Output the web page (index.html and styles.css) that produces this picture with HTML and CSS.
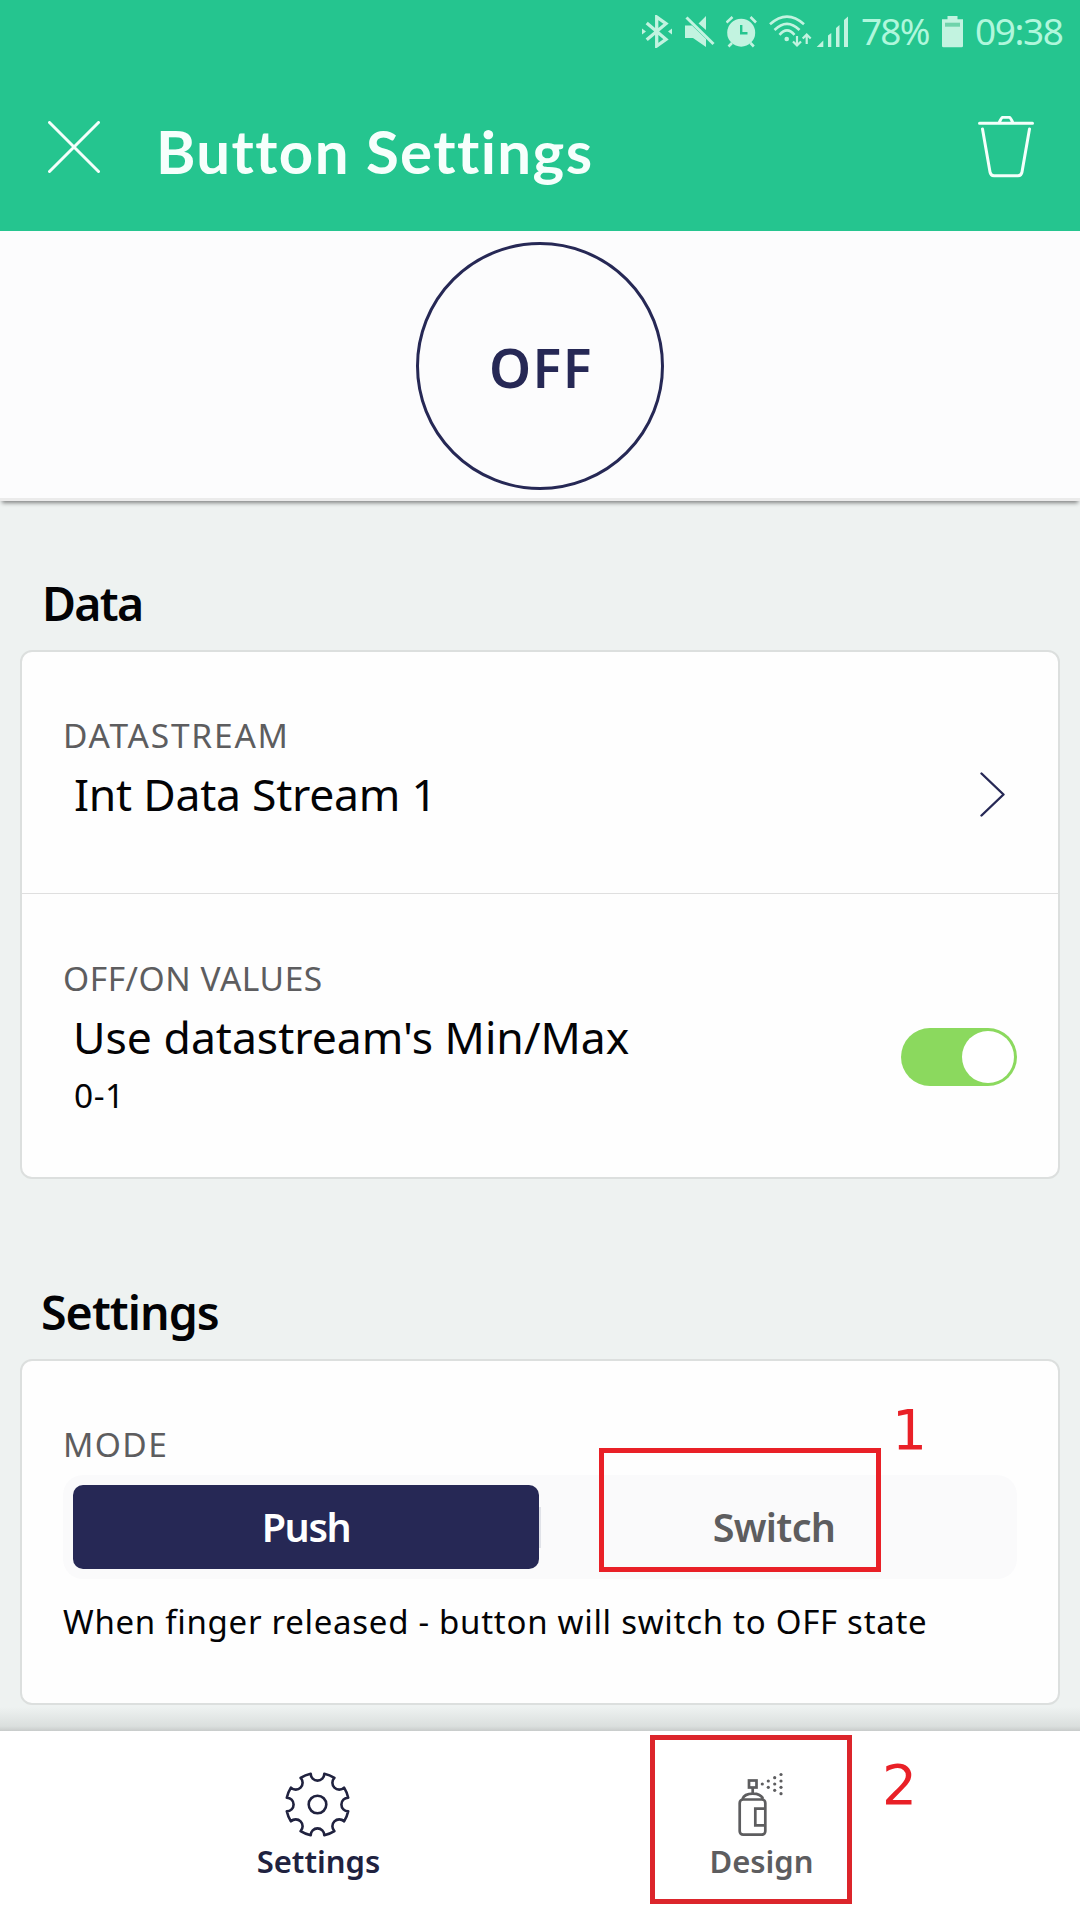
FILE: index.html
```html
<!DOCTYPE html>
<html lang="en">
<head>
<meta charset="utf-8">
<title>Button Settings</title>
<link rel="stylesheet" href="styles.css">
</head>
<body>
<div class="screen">
  <header class="header">
    <div class="status">
      <svg class="st-bt" width="30" height="33" viewBox="0 0 30 33"><path d="M4.7 8 24 24.3 14.7 31V2L24 8.7 4.7 24.7" fill="none" stroke="currentColor" stroke-width="3.3"/><path d="M0 13.5 4 16.5 0 19.5ZM30 13.5 26 16.5 30 19.5Z" fill="currentColor"/></svg>
      <svg class="st-mute" width="30" height="33" viewBox="0 0 30 33"><path d="M0 10.5H7L21 24V32L8 23H0ZM21 1V15L13.5 8.5Z" fill="currentColor"/><path d="M1.5 2.5 28.5 29" stroke="currentColor" stroke-width="3"/></svg>
      <svg class="st-alarm" width="31" height="33" viewBox="0 0 31 33"><circle cx="15.2" cy="17.7" r="14" fill="currentColor"/><path d="M.5 7.5 6.5 2M24.5 2 30 7.5M6 28 2.5 31.5M24.5 28 27.8 31.5" stroke="currentColor" stroke-width="2.6"/><path class="hand" d="M15.2 10V18.3H21.5"/></svg>
      <svg class="st-wifi" width="43" height="33" viewBox="0 0 43 33"><g fill="none" stroke="currentColor" stroke-width="2.6"><path d="M1 9.3Q18-6 35 9.3M5.5 15Q18 2.5 30.5 15M10.5 19.8Q18 11 25.5 19.8"/><path d="M28 21V30M24 26.5 28 30.5 32 26.5M37.7 29V20M33.7 23.5 37.7 19.5 41.7 23.5" stroke-width="2.2"/></g><circle cx="17.7" cy="24" r="2.3" fill="currentColor"/></svg>
      <svg class="st-signal" width="33" height="33" viewBox="0 0 33 33"><path d="M.7 32 7.3 25.5V32ZM12 32V20.5L15.3 18V32ZM20 32V13L23.5 10V32ZM28 32V5L32 1.5V32Z" fill="currentColor"/></svg>
      <span class="st-pct">78%</span>
      <svg class="st-batt" width="21" height="33" viewBox="0 0 21 33"><path d="M5.5 1H15.5V4.3H21V31Q21 32.3 19.5 32.3H1.5Q0 32.3 0 31V4.3H5.5Z" fill="currentColor"/><path class="level" d="M3 7.7H18V11.7H3Z"/></svg>
      <span class="st-time">09:38</span>
    </div>
    <div class="bar">
      <svg class="close" width="52" height="52" viewBox="0 0 52 52"><path d="M1.5 1.5 50.5 50.5M50.5 1.5 1.5 50.5"/></svg>
      <h1 class="title">Button Settings</h1>
      <svg class="trash" width="56" height="62" viewBox="0 0 56 62"><path d="M1.5 7.2H54.5M21 7Q23.5 1.2 25 1.2H31Q32.5 1.2 35 7M4.5 13 12 56Q12.6 59.7 16 59.7H40Q43.4 59.700 44 56L51.5 13"/></svg>
    </div>
  </header>

  <section class="preview"><div class="knob">OFF</div></section>

  <main class="content">
    <h2 class="heading">Data</h2>
    <div class="card">
      <div class="row stream">
        <div>
          <div class="label wide">DATASTREAM</div>
          <div class="value tight">Int Data Stream 1</div>
        </div>
        <svg class="chevron" width="25" height="45" viewBox="0 0 25 45"><path d="M1.5 1.500 23.500 22.500 1.500 43.500"/></svg>
      </div>
      <div class="row range">
        <div>
          <div class="label">OFF/ON VALUES</div>
          <div class="value">Use datastream's Min/Max</div>
          <div class="sub">0-1</div>
        </div>
        <div class="toggle"><span class="thumb"></span></div>
      </div>
    </div>

    <h2 class="heading second">Settings</h2>
    <div class="card mode">
      <div class="label medium">MODE</div>
      <div class="segmented">
        <div class="option active">Push</div>
        <div class="divider"></div>
        <div class="option">Switch</div>
      </div>
      <p class="hint">When finger released - button will switch to OFF state</p>
    </div>
  </main>

  <nav class="tabs">
    <div class="tab current">
      <svg width="66" height="66" viewBox="-32.500 -32.500 66 66"><g fill="none" stroke="currentColor" stroke-width="2.600" stroke-linejoin="round"><path d="M6.800-30.700A31.500 31.500 0 0 1 16.900-26.600A6.800 6.800 0 0 0 26.600-16.900A31.500 31.500 0 0 1 30.700-6.800A6.800 6.800 0 0 0 30.700 6.800A31.500 31.500 0 0 1 26.600 16.900A6.800 6.800 0 0 0 16.900 26.600A31.500 31.500 0 0 1 6.800 30.700A6.800 6.800 0 0 0-6.800 30.700A31.500 31.500 0 0 1-16.900 26.600A6.800 6.800 0 0 0-26.600 16.900A31.500 31.500 0 0 1-30.700 6.800A6.800 6.800 0 0 0-30.700-6.800A31.500 31.500 0 0 1-26.600-16.900A6.800 6.800 0 0 0-16.900-26.600A31.500 31.500 0 0 1-6.800-30.700A6.800 6.800 0 0 0 6.800-30.700Z"/><circle r="8.800"/></g></svg>
      <span>Settings</span>
    </div>
    <div class="tab">
      <svg width="46" height="66" viewBox="0 0 46 66"><g fill="none" stroke="currentColor" stroke-width="2.700"><rect x="1.700" y="27.500" width="25.600" height="35.200" rx="3.500"/><path d="M4.500 27C7 19.700 22.500 19.700 25 27M14.700 15.500V21.500M27.300 36.700H17.300V53.300H27.300"/><rect x="11" y="8.500" width="7.500" height="7"/></g><g fill="currentColor"><circle cx="24.300" cy="12" r="1.600"/><circle cx="30.300" cy="9" r="1.600"/><circle cx="30.300" cy="15.300" r="1.600"/><circle cx="36.700" cy="5.700" r="1.600"/><circle cx="36.700" cy="12" r="1.600"/><circle cx="36.700" cy="18.300" r="1.600"/><circle cx="43" cy="2.500" r="1.600"/><circle cx="43" cy="9" r="1.600"/><circle cx="43" cy="15.300" r="1.600"/><circle cx="43" cy="21.700" r="1.600"/></g></svg>
      <span>Design</span>
    </div>
  </nav>

  <div class="mark mark-switch"></div>
  <div class="step step-one">1</div>
  <div class="mark mark-design"></div>
  <div class="step step-two">2</div>
</div>
</body>
</html>
```

FILE: styles.css
```css
* { box-sizing: border-box; }

body {
  margin: 0;
  font-family: "Noto Sans", "Open Sans", sans-serif;
  color: #030305;
}

svg { display: block; flex: none; }

.screen {
  position: relative;
  display: flex;
  flex-direction: column;
  width: 1080px;
  height: 1920px;
  overflow: hidden;
  background: #eef2f1;
}

/* Header */
.header {
  flex: none;
  height: 231px;
  background: #25c58f;
}

.status {
  display: flex;
  align-items: center;
  height: 62px;
  padding-left: 642px;
  color: #c2f3e0;
}

.st-mute { margin-left: 13px; }
.st-alarm { margin-left: 11px; }
.st-wifi { margin-left: 12px; }
.st-signal { margin-left: 4px; }
.st-batt { margin-left: 14px; }

.hand {
  fill: none;
  stroke: #25c58f;
  stroke-width: 2.4;
}

.level { fill: #6fd3ab; }

.st-pct,
.st-time {
  flex: none;
  font-size: 37px;
  line-height: 62px;
  letter-spacing: -1.8px;
  color: #b0f7dc;
}

.st-pct { width: 67px; margin-left: 12px; }
.st-time { margin-left: 12px; letter-spacing: -1.4px; }

.bar {
  display: flex;
  align-items: center;
  height: 169px;
  padding: 0 46px 0 48px;
}

.close, .trash {
  fill: none;
  stroke: #f4fffb;
  stroke-width: 3;
  stroke-linecap: round;
}

.title {
  flex: 1;
  margin: 0 0 0 56px;
  padding-top: 9px;
  font-family: Lato, sans-serif;
  font-size: 60px;
  font-weight: 700;
  line-height: 70px;
  letter-spacing: 1.4px;
  white-space: nowrap;
  color: #f6fffc;
}

/* Widget preview */
.preview {
  flex: none;
  display: flex;
  justify-content: center;
  height: 270px;
  padding-top: 11px;
  background: #fcfcfd;
  border-bottom: 3px solid #ebebeb;
  box-shadow: 0 4px 4px -2px rgba(0, 0, 0, .45);
}

.knob {
  width: 248px;
  height: 248px;
  padding-left: 2px;
  border: 3px solid #262855;
  border-radius: 50%;
  font-size: 53.5px;
  font-weight: 600;
  line-height: 245px;
  letter-spacing: 1.5px;
  text-align: center;
  color: #262855;
}

/* Cards */
.content {
  flex: none;
  height: 1230px;
  padding: 72px 20px 0;
}

.heading {
  margin: 0 0 17px 22px;
  font-size: 46.5px;
  font-weight: 600;
  line-height: 60px;
  letter-spacing: -1.7px;
}

.heading.second {
  margin: 103px 0 17px 21px;
  letter-spacing: -.95px;
}

.card {
  background: #fefefe;
  border: 2px solid #dcdfde;
  border-radius: 12px;
}

.row {
  display: flex;
  justify-content: space-between;
  padding: 0 40px 0 41px;
}

.stream {
  height: 242px;
  padding-top: 63px;
  padding-right: 53px;
  border-bottom: 1px solid #dfdfdf;
}

.range { height: 283px; padding-top: 64px; }

.label {
  font-size: 33.5px;
  line-height: 40px;
  letter-spacing: .55px;
  color: #5d5d5f;
}

.label.wide { letter-spacing: 1.8px; }
.label.medium { letter-spacing: 1.4px; }

.value {
  margin: 11px 0 0 10px;
  font-size: 44.5px;
  line-height: 56px;
}

.value.tight { margin-left: 11px; letter-spacing: -.25px; }

.sub {
  margin: 10px 0 0 11px;
  font-size: 33.5px;
  line-height: 40px;
  letter-spacing: .5px;
}

.chevron {
  margin-top: 57px;
  fill: none;
  stroke: #262855;
  stroke-width: 2.4;
  stroke-linecap: round;
  stroke-linejoin: round;
}

.toggle {
  display: flex;
  justify-content: flex-end;
  width: 116px;
  height: 58px;
  margin-top: 70px;
  margin-right: 1px;
  padding: 3px;
  border-radius: 29px;
  background: #8bd95e;
}

.thumb {
  width: 52px;
  height: 52px;
  border-radius: 50%;
  background: #fff;
}

.mode {
  height: 346px;
  padding: 63px 41px 0;
}

.segmented {
  display: flex;
  align-items: center;
  height: 104px;
  margin-top: 11px;
  padding: 0 10px;
  border-radius: 20px;
  background: #fafafb;
}

.divider {
  flex: none;
  width: 2px;
  height: 41px;
  background: #e0e2e8;
}

.option {
  flex: 1;
  height: 84px;
  font-size: 39.5px;
  font-weight: 600;
  line-height: 84px;
  letter-spacing: -.7px;
  text-align: center;
  color: #5d5d5f;
}

.option.active {
  letter-spacing: -1.4px;
  border-radius: 10px;
  background: #262855;
  color: #fff;
}

.hint {
  margin: 21px 0 0;
  font-size: 33px;
  line-height: 44px;
  letter-spacing: .71px;
  white-space: nowrap;
}

/* Bottom tabs */
.tabs {
  position: relative;
  flex: none;
  display: grid;
  grid-template-columns: 443px 443px;
  justify-content: center;
  height: 189px;
  background: #fff;
}

.tabs::before {
  content: "";
  position: absolute;
  top: -24px;
  left: 0;
  right: 0;
  height: 24px;
  background: linear-gradient(rgba(0, 0, 0, 0), rgba(20, 30, 25, .09) 80%, rgba(0, 0, 0, .16));
}

.tab {
  display: flex;
  flex-direction: column;
  align-items: center;
  padding-top: 41px;
  color: #5d5d5f;
}

.tab:last-child svg { margin-right: 2px; }

.tab span {
  margin-top: 3px;
  font-size: 31px;
  font-weight: 600;
  line-height: 40px;
}

.tab.current { color: #20223f; }
.tab.current svg { margin-right: 2px; }

/* Callouts drawn over the screen */
.mark {
  position: absolute;
  border: 5px solid #e92027;
}

.mark-switch { left: 599px; top: 1448px; width: 282px; height: 124px; }
.mark-design { left: 650px; top: 1735px; width: 202px; height: 169px; border-color: #dc252b; }

.step {
  position: absolute;
  font-family: "DejaVu Sans", sans-serif;
  font-size: 55px;
  line-height: 60px;
  color: #e92027;
}

.step-one { left: 892px; top: 1400px; }
.step-two { left: 882px; top: 1755px; }
```
